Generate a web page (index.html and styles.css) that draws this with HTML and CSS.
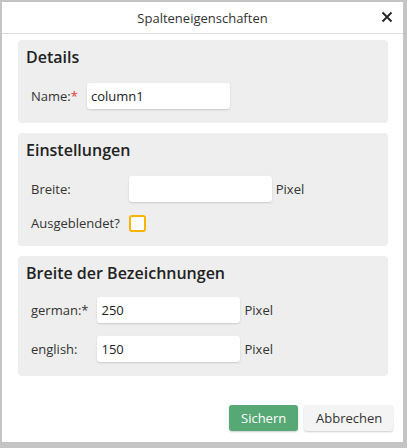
FILE: index.html
```html
<!DOCTYPE html>
<html lang="de">
<head>
    <meta charset="UTF-8">
    <title>Spalteneigenschaften</title>
    <link rel="stylesheet" href="styles.css">
</head>
<body>

    <div class="dialog">
        <div class="dialog-header">
            <span class="dialog-title">Spalteneigenschaften</span>
            <span class="dialog-close">
                <svg width="12" height="12" viewBox="0 0 12 12">
                    <path d="M1.5 1.5 L10.5 10.5 M10.5 1.5 L1.5 10.5" stroke="#222" stroke-width="1.8" fill="none"/>
                </svg>
            </span>
        </div>

        <div class="dialog-body">
            <div class="section">
                <h2>Details</h2>
                <div class="form-grid">
                    <label>Name:<span class="req">*</span></label>
                    <input class="field" type="text" value="column1">
                </div>
            </div>

            <div class="section">
                <h2>Einstellungen</h2>
                <div class="form-grid">
                    <label>Breite:</label>
                    <div class="with-unit"><input class="field" type="text" value=""><span>Pixel</span></div>
                    <label>Ausgeblendet?</label>
                    <div><span class="checkbox"></span></div>
                </div>
            </div>

            <div class="section section-labels">
                <h2>Breite der Bezeichnungen</h2>
                <div class="form-grid">
                    <label>german:*</label>
                    <div class="with-unit"><input class="field" type="text" value="250"><span>Pixel</span></div>
                    <label>english:</label>
                    <div class="with-unit"><input class="field" type="text" value="150"><span>Pixel</span></div>
                </div>
            </div>
        </div>

        <div class="dialog-footer">
            <button class="btn btn-save">Sichern</button>
            <button class="btn btn-cancel">Abbrechen</button>
        </div>
    </div>

</body>
</html>
```

FILE: styles.css
```css
body {
    margin: 0;
    padding: 0;
    background-color: #c4c4c4;
    font-family: "Open Sans", Arial, sans-serif;
    font-size: 13px;
    color: #333;
}

.dialog {
    margin: 2px 0 0 2px;
    width: 401px;
    height: 440px;
    background-color: #fff;
    display: flex;
    flex-direction: column;
}

.dialog-header {
    height: 31px;
    border-bottom: 1px solid #ddd;
    display: flex;
    align-items: center;
    justify-content: center;
    position: relative;
}
.dialog-title {
    font-size: 13px;
    color: #333;
}
.dialog-close {
    position: absolute;
    right: 10px;
    top: 9px;
    width: 12px;
    height: 12px;
}
.dialog-close svg {
    display: block;
}

.dialog-body {
    padding: 6px 15px 0 16px;
    display: flex;
    flex-direction: column;
    gap: 10px;
}

.section {
    background-color: #eee;
    border-radius: 4px;
    padding: 5px 8px 14px 8px;
}
.section h2 {
    margin: 0 0 14px 0;
    font-size: 16px;
    font-weight: 600;
    line-height: 24px;
    color: #222;
}
.section-labels h2 {
    margin-bottom: 12px;
}

.form-grid {
    display: grid;
    grid-template-columns: auto 1fr;
    column-gap: 9px;
    row-gap: 12px;
    align-items: center;
    padding-left: 5px;
}
.section-labels .form-grid {
    row-gap: 13px;
}
.form-grid label {
    color: #333;
}
.req {
    color: #e53935;
}

.with-unit {
    display: flex;
    align-items: center;
    gap: 4px;
}

.field {
    width: 143px;
    height: 26px;
    box-sizing: border-box;
    border: none;
    border-radius: 3px;
    background-color: #fff;
    box-shadow: 0 1px 2px rgba(0, 0, 0, 0.15);
    padding: 0 4px;
    font-family: "Open Sans", Arial, sans-serif;
    font-size: 13px;
    color: #222;
}

.checkbox {
    display: block;
    width: 17px;
    height: 17px;
    box-sizing: border-box;
    border: 2px solid #f7b500;
    border-radius: 3px;
    background-color: #fff;
}

.dialog-footer {
    margin-top: auto;
    padding: 0 10px 11px 0;
    display: flex;
    justify-content: flex-end;
    gap: 6px;
}
.btn {
    height: 26px;
    border: none;
    border-radius: 3px;
    font-family: "Open Sans", Arial, sans-serif;
    font-size: 13px;
    padding: 0 12px;
    cursor: pointer;
    box-shadow: 0 1px 2px rgba(0, 0, 0, 0.2);
}
.btn-save {
    background-color: #56a874;
    color: #fff;
    width: 69px;
}
.btn-cancel {
    background-color: #f4f4f4;
    color: #333;
    width: 89px;
}
```
